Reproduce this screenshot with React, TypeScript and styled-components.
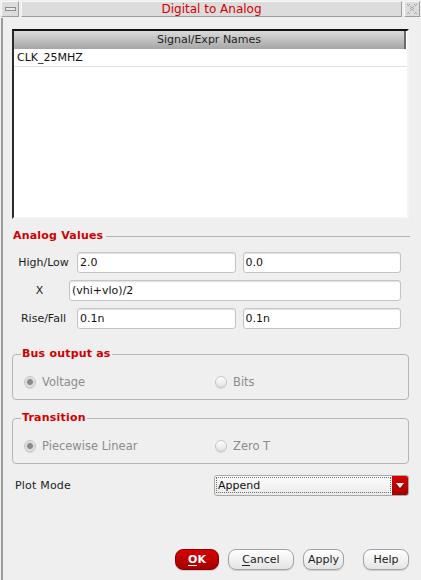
import React from "react";
import styled, { createGlobalStyle } from "styled-components";

const GlobalStyle = createGlobalStyle`
  html, body {
    margin: 0;
    padding: 0;
    background: #efefef;
  }
  body {
    font-family: "DejaVu Sans", "Liberation Sans", sans-serif;
    font-size: 11px;
    color: #1c1c1c;
  }
`;

const Frame = styled.div`
  width: 421px;
  height: 580px;
  display: flex;
  flex-direction: column;
  background: #efefef;
  overflow: hidden;
`;

const TitleBar = styled.div`
  height: 18px;
  display: flex;
  gap: 2px;
  padding: 1px 1px 0 1px;
  box-sizing: border-box;
`;

const TitleButton = styled.div<{ $w: number }>`
  width: ${(p) => p.$w}px;
  height: 16px;
  box-sizing: border-box;
  background: #dcdcdc;
  border: 1px solid;
  border-color: #f7f7f7 #9e9e9e #9e9e9e #f7f7f7;
  display: flex;
  align-items: center;
  justify-content: center;
`;

const TitleText = styled.div`
  flex: 1;
  height: 16px;
  box-sizing: border-box;
  background: #dcdcdc;
  border: 1px solid;
  border-color: #f7f7f7 #9e9e9e #9e9e9e #f7f7f7;
  color: #d40000;
  font-size: 12px;
  line-height: 14px;
  text-align: center;
`;

const Body = styled.div`
  flex: 1;
  display: flex;
  flex-direction: column;
  margin-left: 1px;
  border-left: 2px solid #9c9c9c;
  padding: 11px 12px 10px 9px;
`;

const ListBox = styled.div`
  height: 190px;
  box-sizing: border-box;
  background: #ffffff;
  border: 2px solid;
  border-color: #111111 #f4f4f4 #f4f4f4 #2a2a2a;
`;

const ListHeader = styled.div`
  height: 18px;
  box-sizing: border-box;
  background: linear-gradient(#dadada, #a6a6a6);
  border-right: 2px solid #6a6a6a;
  margin-right: 1px;
  text-align: center;
  line-height: 18px;
  color: #222;
`;

const ListRow = styled.div`
  height: 17px;
  line-height: 17px;
  padding-left: 3px;
  border-bottom: 1px solid #e2e2e2;
  color: #111;
`;

const SectionHead = styled.div`
  display: flex;
  align-items: center;
  gap: 3px;
  margin-top: 10px;
  height: 14px;
  padding-left: 1px;
  margin-right: -1px;
`;

const RedLabel = styled.span`
  color: #d00000;
  font-weight: bold;
  letter-spacing: 0.2px;
  line-height: 14px;
`;

const Rule = styled.div`
  flex: 1;
  height: 1px;
  background: #b4b4b4;
`;

const FieldRow = styled.div<{ $top: number }>`
  display: flex;
  align-items: center;
  gap: 7px;
  height: 21px;
  margin-top: ${(p) => p.$top}px;
  padding-right: 8px;
`;

const FieldLabel = styled.div<{ $w: number }>`
  width: ${(p) => p.$w}px;
  margin-right: -5px;
  text-align: center;
`;

const TextBox = styled.div`
  flex: 1;
  height: 21px;
  box-sizing: border-box;
  background: #fff;
  border: 1px solid #c4c4c4;
  border-radius: 3px;
  box-shadow: inset 0 1px 1px rgba(0, 0, 0, 0.12);
  padding-left: 2px;
  line-height: 19px;
  color: #111;
`;

const Group = styled.fieldset<{ $top: number }>`
  margin: ${(p) => p.$top}px 0 0 0;
  padding: 12px 0 8px 11px;
  border: 1px solid #b6b6b6;
  border-radius: 4px;
  min-width: 0;
`;

const Legend = styled.legend`
  padding: 0 1px;
  margin-left: -3px;
  line-height: 14px;
`;

const RadioRow = styled.div`
  display: grid;
  grid-template-columns: 191px 1fr;
  height: 18px;
  align-items: center;
`;

const RadioItem = styled.div`
  display: flex;
  align-items: center;
  gap: 6px;
  color: #8c8c8c;
  font-size: 11.5px;
`;

const RadioDot = styled.span<{ $on?: boolean }>`
  width: 12px;
  height: 12px;
  box-sizing: border-box;
  border-radius: 50%;
  border: 1px solid #c6c6c6;
  background: ${(p) =>
    p.$on
      ? "radial-gradient(circle, #8a8a8a 0 2.6px, #d6d6d6 3.2px, #f6f6f6 100%)"
      : "linear-gradient(#ffffff, #e2e2e2)"};
  box-shadow: 0 1px 0 #d8d8d8;
`;

const PlotRow = styled.div`
  display: flex;
  align-items: center;
  margin-top: 11px;
  height: 21px;
  padding-left: 3px;
`;

const PlotLabel = styled.div`
  flex: 1;
  letter-spacing: 0.2px;
`;

const Combo = styled.div`
  width: 195px;
  height: 21px;
  box-sizing: border-box;
  display: flex;
  border: 1px solid #a8a8a8;
  border-radius: 3px;
  background: linear-gradient(#fdfdfd, #eaeaea);
  overflow: hidden;
`;

const ComboText = styled.div`
  flex: 1;
  margin: 1px 1px 2px 1px;
  border: 1px dotted #6e6e6e;
  line-height: 15px;
  padding-left: 1px;
  color: #111;
`;

const ComboArrow = styled.div`
  width: 16px;
  background: linear-gradient(#d80000, #a00000);
  display: flex;
  align-items: center;
  justify-content: center;
`;

const ButtonBar = styled.div`
  margin-top: auto;
  display: flex;
  justify-content: flex-end;
  height: 21px;
`;

const Btn = styled.button<{ $w: number; $gap: number; $primary?: boolean }>`
  width: ${(p) => p.$w}px;
  height: 21px;
  margin-left: ${(p) => p.$gap}px;
  padding: 0;
  border-radius: 8px;
  font-family: "DejaVu Sans", "Liberation Sans", sans-serif;
  font-size: 11px;
  font-weight: ${(p) => (p.$primary ? "bold" : "normal")};
  color: ${(p) => (p.$primary ? "#ffffff" : "#1c1c1c")};
  border: 1px solid ${(p) => (p.$primary ? "#8c0000" : "#a2a2a2")};
  background: ${(p) =>
    p.$primary
      ? "linear-gradient(#d80000, #a40000)"
      : "linear-gradient(#ffffff, #e4e4e4)"};
  box-shadow: 0 1px 1px rgba(0, 0, 0, 0.15);
  u {
    text-decoration: none;
    border-bottom: 1px solid currentColor;
    line-height: 11px;
    display: inline-block;
  }
`;

function MinimizeIcon() {
  return (
    <svg width="11" height="4" viewBox="0 0 11 4">
      <rect x="0.5" y="0.5" width="10" height="3" fill="#e8e8e8" stroke="#8c8c8c" />
    </svg>
  );
}

function CloseIcon() {
  return (
    <svg width="12" height="12" viewBox="0 0 12 12">
      <g fill="#a8a8a8">
        <rect x="1" y="1" width="1" height="1" />
        <rect x="3" y="1" width="1" height="1" />
        <rect x="8" y="1" width="1" height="1" />
        <rect x="10" y="1" width="1" height="1" />
        <rect x="2" y="2" width="1" height="1" />
        <rect x="4" y="3" width="1" height="1" />
        <rect x="7" y="3" width="1" height="1" />
        <rect x="9" y="2" width="1" height="1" />
        <rect x="5" y="4" width="2" height="1" />
        <rect x="5" y="6" width="2" height="1" />
        <rect x="4" y="5" width="1" height="1" />
        <rect x="7" y="5" width="1" height="1" />
        <rect x="4" y="7" width="1" height="1" />
        <rect x="7" y="7" width="1" height="1" />
        <rect x="2" y="9" width="1" height="1" />
        <rect x="9" y="9" width="1" height="1" />
        <rect x="1" y="10" width="1" height="1" />
        <rect x="3" y="10" width="1" height="1" />
        <rect x="8" y="10" width="1" height="1" />
        <rect x="10" y="10" width="1" height="1" />
      </g>
    </svg>
  );
}

function ArrowDown() {
  return (
    <svg width="8" height="5" viewBox="0 0 8 5">
      <path d="M0 0H8L4 5Z" fill="#ffffff" />
    </svg>
  );
}

export default function App() {
  return (
    <>
      <GlobalStyle />
      <Frame>
        <TitleBar>
          <TitleButton $w={18}>
            <MinimizeIcon />
          </TitleButton>
          <TitleText>Digital to Analog</TitleText>
          <TitleButton $w={16}>
            <CloseIcon />
          </TitleButton>
        </TitleBar>
        <Body>
          <ListBox>
            <ListHeader>Signal/Expr Names</ListHeader>
            <ListRow>CLK_25MHZ</ListRow>
          </ListBox>

          <SectionHead>
            <RedLabel>Analog Values</RedLabel>
            <Rule />
          </SectionHead>

          <FieldRow $top={9}>
            <FieldLabel $w={63}>High/Low</FieldLabel>
            <TextBox>2.0</TextBox>
            <TextBox>0.0</TextBox>
          </FieldRow>
          <FieldRow $top={7}>
            <FieldLabel $w={55}>X</FieldLabel>
            <TextBox>(vhi+vlo)/2</TextBox>
          </FieldRow>
          <FieldRow $top={7}>
            <FieldLabel $w={63}>Rise/Fall</FieldLabel>
            <TextBox>0.1n</TextBox>
            <TextBox>0.1n</TextBox>
          </FieldRow>

          <Group $top={18}>
            <Legend>
              <RedLabel>Bus output as</RedLabel>
            </Legend>
            <RadioRow>
              <RadioItem>
                <RadioDot $on />
                Voltage
              </RadioItem>
              <RadioItem>
                <RadioDot />
                Bits
              </RadioItem>
            </RadioRow>
          </Group>

          <Group $top={11}>
            <Legend>
              <RedLabel>Transition</RedLabel>
            </Legend>
            <RadioRow>
              <RadioItem>
                <RadioDot $on />
                Piecewise Linear
              </RadioItem>
              <RadioItem>
                <RadioDot />
                Zero T
              </RadioItem>
            </RadioRow>
          </Group>

          <PlotRow>
            <PlotLabel>Plot Mode</PlotLabel>
            <Combo>
              <ComboText>Append</ComboText>
              <ComboArrow>
                <ArrowDown />
              </ComboArrow>
            </Combo>
          </PlotRow>

          <ButtonBar>
            <Btn $w={44} $gap={0} $primary>
              <u>O</u>K
            </Btn>
            <Btn $w={66} $gap={9}>
              <u>C</u>ancel
            </Btn>
            <Btn $w={41} $gap={9}>
              Apply
            </Btn>
            <Btn $w={46} $gap={19}>
              Help
            </Btn>
          </ButtonBar>
        </Body>
      </Frame>
    </>
  );
}
